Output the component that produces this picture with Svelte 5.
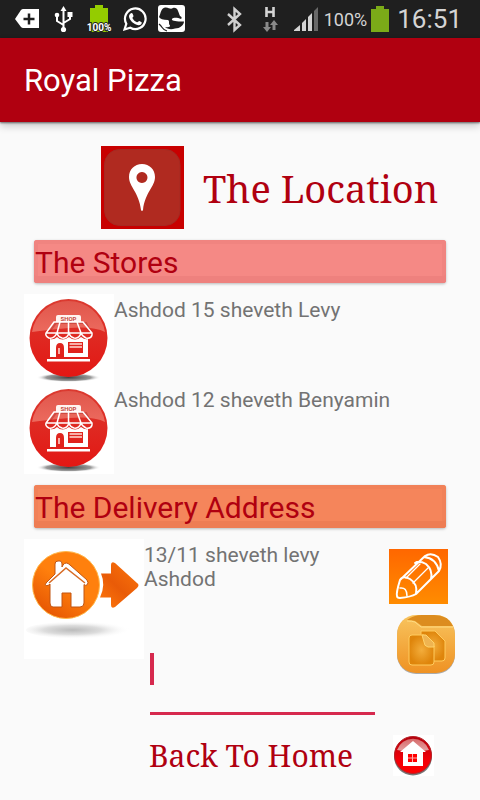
<script>
  const stores = ['Ashdod 15 sheveth Levy', 'Ashdod 12 sheveth Benyamin'];
  let note = $state('');
</script>

<div class="screen">
  <div class="status">
    <div class="group left">
      <svg width="28" height="38" viewBox="0 0 28 38"><path d="M0 19 6 10Q7 9 8 9H24V28H8Q7 28 6 27Z" fill="#fff"/><path d="M14 13.500V24.500M8.500 19H19.500" stroke="#1f1f1f" stroke-width="2.500"/></svg>
      <svg width="21" height="38" viewBox="0 0 21 38" fill="none" stroke="#fff" stroke-width="2"><path d="M9.500 9V30M9.500 25 3 21V15M9.500 23 16 19V13"/><path d="M6.500 11 9.500 6 12.500 11Z" fill="#fff" stroke="none"/><circle cx="9.500" cy="29.500" r="2.600" fill="#fff" stroke="none"/><circle cx="3" cy="15" r="2.300" fill="#fff" stroke="none"/><path d="M13.500 12H18.500V17H13.500Z" fill="#fff" stroke="none"/></svg>
      <svg width="26" height="38" viewBox="0 0 26 38"><path d="M9 5H17V8H22V32H4V8H9Z" fill="#94cc00"/><text x="13" y="31" text-anchor="middle" font-family="Roboto, sans-serif" font-size="10" font-weight="700" fill="#fff" stroke="#1f1f1f" stroke-width="2" paint-order="stroke">100%</text></svg>
      <svg width="24" height="38" viewBox="0 0 24 38"><path d="M1.500 29.500 3.300 23.800A10.300 10.300 0 1 1 7.300 27.800Z" fill="none" stroke="#fff" stroke-width="2.200"/><path d="M7 14C8.500 12.500 9.300 13 9.700 14L10.500 16C10.500 17 9 17.500 9.500 18.300C10.500 20.200 12 21.500 14 22.300C15 22.500 15.500 20.800 16.300 21L18.700 22.200C19 24 17.500 25.300 15.500 25.200C10.500 24.500 6.300 20 6 16.500C6 15.500 6.300 14.600 7 14Z" fill="#fff"/></svg>
      <svg width="27" height="38" viewBox="0 0 27 38"><rect y="5" width="27" height="27" rx="3" fill="#fff"/><path d="M1 17C3 13 3 8 7 7.500C11 7 12 10 15 8C20 7 20 12 22 16C24 17 24 18 23 19C20 18 16 17 14 19C13 20.500 18 22 26 21.500C26 25 22 28.500 17 28.500C13 30 9 29 7 27C10 27.500 12.500 27 12 25.500C10 24 12 21 10 20C5 20 2 19 1 17Z" fill="#1f1f1f"/><path d="M1 24C5 27 4 30 9 31" fill="none" stroke="#1f1f1f" stroke-width="1.200"/></svg>
    </div>
    <div class="group right">
      <svg width="31" height="38" viewBox="0 0 31 38"><path d="M2 14 14 25 8.500 30V9L14 14 2 25" fill="none" stroke="#d0d0d0" stroke-width="2.400"/></svg>
      <svg width="29" height="38" viewBox="0 0 29 38"><path d="M5.500 7V17M12.500 7V17M5.500 12H12.500" stroke="#d4d4d4" stroke-width="2.600"/><path d="M4.500 22H7.500V27H10L6 32 2 27H4.500ZM11.500 30V25H9L13 20 17 25H14.500V30Z" fill="#8a8a8a"/></svg>
      <svg width="24" height="38" viewBox="0 0 24 38"><path d="M0 31V30L6 25V31ZM8 31V23L12 19V31ZM14 31V17L18 13V31Z" fill="#d4d4d4"/><path d="M20 31V11L24 7V31Z" fill="#696969"/></svg>
      <span class="percent">100%</span>
      <svg width="18" height="38" viewBox="0 0 18 38"><path d="M5 6H13V9H18V32H0V9H5Z" fill="#7bab18"/></svg>
      <span class="time">16:51</span>
    </div>
  </div>

  <header><h1>Royal Pizza</h1></header>

  <main>
    <div class="location">
      <svg width="83" height="83" viewBox="0 0 83 83"><path fill="#c80000" d="M0 0H83V83H0Z"/><rect x="3.500" y="3.500" width="75.500" height="76" rx="15" fill="#b02a20" stroke="#a52a22"/><path fill-rule="evenodd" d="M41 18C33.500 18 28 23.500 28 31C28 41 38 46 40 64Q41 66 42 64C44 46 54 41 54 31C54 23.500 48.500 18 41 18ZM41 26A5.500 5.500 0 1 1 40.900 26Z" fill="#fff"/></svg>
      <h2>The Location</h2>
    </div>

    <h3 class="bar stores-bar">The Stores</h3>
    <ul>
      {#each stores as store}
        <li>
          <svg width="90" height="90" viewBox="0 0 90 90">
            <defs>
              <linearGradient id="ball" x1="0" y1="0" x2="0" y2="1"><stop stop-color="#db3a30"/><stop offset="1" stop-color="#e31713"/></linearGradient>
              <linearGradient id="gloss" x1="0" y1="0" x2="0" y2="1"><stop stop-color="#e0564b"/><stop offset="1" stop-color="#ec6a5e"/></linearGradient>
              <radialGradient id="shade"><stop stop-color="#444"/><stop offset="0.700" stop-color="#999"/><stop offset="1" stop-color="#fff" stop-opacity="0"/></radialGradient>
            </defs>
            <path fill="#fff" d="M0 0H90V90H0Z"/>
            <ellipse cx="44.500" cy="83.500" rx="32" ry="4.500" fill="url(#shade)"/>
            <circle cx="44.500" cy="44" r="39" fill="url(#ball)"/>
            <path d="M8 38A37 37 0 0 1 81 38Q70 32 45 34Q22 36 8 38Z" fill="url(#gloss)"/>
            <g stroke="#a11a15" stroke-opacity="0.350" fill="none" transform="translate(1 1)"><path d="M27 48V63M22 40 31 28H61L68 41" stroke-width="2"/></g>
            <path d="M32 28V23Q32 21 34 21H55Q57 21 57 23V28Z" fill="#fff4f0"/>
            <text x="44.500" y="26.500" text-anchor="middle" font-family="Roboto, sans-serif" font-size="6" font-weight="700" fill="#c54b42">SHOP</text>
            <g fill="none" stroke="#fff" stroke-width="1.500"><path d="M30 28H59L68 39V41Q67 45 62 44Q58 42 57 39Q55 45 50 44Q46 43 45 39Q43 45 38 44Q34 43 33 39Q30 45 25 44Q21 42 22 39ZM22 39H68M36 28 33 39M44.500 28V39M53 28 57 39"/></g>
            <path fill-rule="evenodd" d="M26 45Q30 46 33 43Q38 48 45 43Q51 48 57 43Q61 46 64 45V63H40V54Q40 49 36 49Q32 49 32 54V63H26ZM44 48V59H59V48Z" fill="#fff"/>
            <path d="M45.500 50H58M45.500 53H58M35 54V60" stroke="#ffdbd5" stroke-width="1.500"/>
            <path d="M23 65H66V67.500H23Z" fill="#fff"/>
          </svg>
          <span>{store}</span>
        </li>
      {/each}
    </ul>

    <h3 class="bar delivery-bar">The Delivery Address</h3>
    <div class="delivery">
      <svg width="120" height="120" viewBox="0 0 120 120">
        <defs>
          <linearGradient id="orange" x1="0" y1="1" x2="0.700" y2="0"><stop stop-color="#df4a00"/><stop offset="0.600" stop-color="#ff800d"/></linearGradient>
          <linearGradient id="arrow" x1="0" y1="1" x2="0.800" y2="0"><stop stop-color="#ff780b"/><stop offset="0.500" stop-color="#e95b07"/><stop offset="1" stop-color="#f9720b"/></linearGradient>
          <radialGradient id="ground" cx="0.400"><stop stop-color="#bbb"/><stop offset="0.500" stop-color="#ddd"/><stop offset="1" stop-color="#fff" stop-opacity="0"/></radialGradient>
        </defs>
        <path fill="#fff" d="M0 0H120V120H0Z"/>
        <ellipse cx="60" cy="91" rx="58" ry="9" fill="url(#ground)"/>
        <path d="M77 34.500H87V26Q87 22 91 24L113 44Q116 46 113 49L91 68Q87 70 87 66V58.500H76Q82 46 77 34.500Z" fill="url(#arrow)"/>
        <circle cx="42" cy="46" r="35.500" fill="#fff"/>
        <circle cx="42" cy="46" r="33.500" fill="url(#orange)" stroke="#ffb84b"/>
        <path d="M22 44 31 35V25Q31 22 34 22H36Q38 22 38 25V28L39 26Q42 22 46 26L63 41Q65 44 63 46Q61 47 60 45.500V64Q60 68 56 68H47V54H38V68H29Q26 68 26 64V45L25 46Q20 48 22 44Z" fill="#fff" stroke="#c25511"/>
        <path d="M25 44 42 29 61 44" fill="none" stroke="#d76b25" stroke-width="1.500"/>
      </svg>
      <div class="details">
        <p>13/11 sheveth levy<br>Ashdod</p>
        <div class="field">
          <input type="text" aria-label="Delivery address" bind:value={note}>
          {#if !note}<i class="caret"></i>{/if}
        </div>
      </div>
      <div class="actions">
        <button aria-label="Edit address">
          <svg width="59" height="55" viewBox="0 0 59 55"><defs><linearGradient id="edit" x1="0" y1="0" x2="0" y2="1"><stop stop-color="#ff6700"/><stop offset="1" stop-color="#ff8c00"/></linearGradient></defs><path fill="url(#edit)" d="M0 0H59V55H0Z"/><g fill="none" stroke="#fff" stroke-width="2" stroke-linejoin="round" stroke-linecap="round"><path d="M8 47Q7 44 11 31L36 7Q42 3 49 8Q54 15 50 22L27 45Q22 48 11 49Q8 49 8 47ZM11 31Q14 26 21 30Q29 35 27 45M35 8Q47 9 50 22M26 14Q30 11 37 15Q44 21 42 30"/><path d="M17 29 31 15M24 34 39 19" stroke-width="1.300"/><path d="M11 39Q18 38 18 47" stroke-width="1.500"/></g></svg>
        </button>
        <button class="copy" aria-label="Copy address">
          <svg width="59" height="60" viewBox="0 0 59 60"><defs><linearGradient id="folder" x1="0" y1="0" x2="0" y2="1"><stop stop-color="#f8c45e"/><stop offset="1" stop-color="#ef9223"/></linearGradient><radialGradient id="paper"><stop stop-color="#f3ad3b"/><stop offset="1" stop-color="#df850b"/></radialGradient></defs><rect y="1" width="58" height="58" rx="19" fill="#aaa"/><rect y="0" width="58" height="58" rx="19" fill="url(#folder)"/><path d="M10 5Q17 0 25 0H37Q51 0 56 11H25L18 6Q15 5 10 5Z" fill="#dc8c1f"/><path d="M10 6Q15 6 18 7L24 12H56" fill="none" stroke="#ffdc82"/><path d="M24 16H38L48 26V43Q48 46 45 46H24Z" fill="url(#paper)" stroke="#ffcb5e"/><path d="M15 20H27L37 31V47Q37 50 34 50H15Q12 50 12 47V23Q12 20 15 20Z" fill="url(#paper)" stroke="#ffcb5e"/><path d="M25 20H29L37 28V32H31Q27 31 27 27Z" fill="#efb451" stroke="#ffd36b"/></svg>
        </button>
      </div>
    </div>

    <a class="home" href="#home">
      <span>Back To Home</span>
      <svg width="41" height="41" viewBox="0 0 41 41"><defs><linearGradient id="homeball" x1="0" y1="0" x2="0" y2="1"><stop stop-color="#b0000c"/><stop offset="0.600" stop-color="#f00008"/><stop offset="1" stop-color="#ff0000"/></linearGradient><linearGradient id="homegloss" x1="0" y1="0" x2="0" y2="1"><stop stop-color="#d66a6a"/><stop offset="1" stop-color="#e6a3a3"/></linearGradient></defs><path fill="#fff" d="M0 0H41V41H0Z"/><circle cx="20" cy="21.500" r="19" fill="#777"/><circle cx="20" cy="20" r="18.500" fill="url(#homeball)" stroke="#b92026"/><path d="M4 15A17 17 0 0 1 36 15Q20 18 4 15Z" fill="url(#homegloss)"/><path d="M20 6 33 17H30V31H10V17H7Z" fill="#fff"/><path d="M15 19H24V27H15Z" fill="#f00"/><path d="M19.500 19V27M15 23H24" stroke="#ffb0b0"/></svg>
    </a>
  </main>
</div>

<style>
  :global(body) { margin: 0; background: #fafafa; }
  .screen { min-height: 100vh; background: #fafafa; color: #737373; font-family: Roboto, sans-serif; }
  svg { display: block; flex: none; }
  h1, h2, h3, p, ul { margin: 0; padding: 0; font-weight: 400; }
  .status { display: flex; justify-content: space-between; height: 38px; padding: 0 18px 0 15px; background: #1f1f1f; color: #d4d4d4; }
  .group { display: flex; align-items: center; }
  .left { gap: 11px; }
  .right { gap: 4px; }
  .percent { margin-left: 2px; font-size: 18px; }
  .time { margin-left: 4px; font-size: 26px; }
  header { display: flex; align-items: center; height: 84px; padding: 0 24px; background: #b00010; box-shadow: 0 1px 2px #0008, 0 4px 8px #0003; color: #fff; }
  h1 { font-size: 31px; }
  main { padding: 24px 24px 0; }
  .location { display: flex; align-items: center; gap: 19px; height: 83px; margin-left: 77px; }
  h2, .home { color: #b00010; font-family: "Noto Serif", "Droid Serif", "DejaVu Serif", serif; }
  h2 { font-size: 38px; line-height: 52px; white-space: nowrap; }
  .bar { margin: 11px 10px; padding: 0 1px; height: 43px; box-sizing: border-box; border-radius: 3px; color: #b00010; font-size: 30px; line-height: 45px; }
  .stores-bar { background: #f58985; box-shadow: inset 0 -7px #ee817e, inset 0 0 0 4px #f08480, 0 1px 3px #0004; }
  .delivery-bar { background: #f5855b; box-shadow: inset 0 -7px #ee7d54, inset 0 0 0 4px #f18158, 0 1px 3px #0004; }
  ul { list-style: none; }
  li { display: flex; font-size: 21px; line-height: 24px; }
  li span { padding-top: 4px; }
  .delivery { display: flex; }
  .details { flex: 1; min-width: 0; }
  p { padding-top: 4px; font-size: 21px; line-height: 24px; }
  .field { position: relative; margin: 49px 14px 0 6px; }
  input { display: block; width: 100%; height: 75px; box-sizing: border-box; padding: 0 4px 16px; border: 0; border-bottom: 3px solid #d6294e; border-radius: 0; outline: 0; background: none; color: #333; font: 27px Roboto, sans-serif; caret-color: #d6294e; }
  .caret { position: absolute; left: 0; top: 13px; width: 4px; height: 32px; background: #d6294e; pointer-events: none; }
  .actions { display: flex; flex-direction: column; gap: 11px; width: 67px; padding-top: 10px; }
  button { padding: 0; border: 0; background: none; align-self: flex-start; cursor: pointer; }
  .copy { align-self: flex-end; }
  .home { display: flex; align-items: center; justify-content: space-between; height: 41px; margin: 20px 22px 0 125px; font-size: 30px; text-decoration: none; white-space: nowrap; }
</style>
